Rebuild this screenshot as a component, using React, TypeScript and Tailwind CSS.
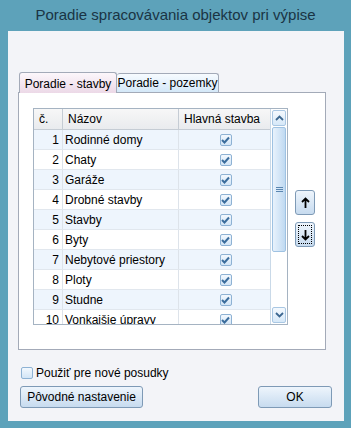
const rows = [
  "Rodinné domy",
  "Chaty",
  "Garáže",
  "Drobné stavby",
  "Stavby",
  "Byty",
  "Nebytové priestory",
  "Ploty",
  "Studne",
  "Vonkajšie úpravy",
];

function Check() {
  return (
    <div className="w-[12px] h-[12px] rounded-[2px] border border-[#8eb2d4] bg-gradient-to-b from-[#f2f8fe] to-[#d3e5f6] flex items-center justify-center">
      <svg width="9" height="8" viewBox="0 0 9 8">
        <path d="M1 4 L3.5 6.5 L8 1.5" fill="none" stroke="#3a6c9c" strokeWidth="2" />
      </svg>
    </div>
  );
}

function ScrollBar() {
  return (
    <div className="w-[18px] h-full border-l border-[#c9d9e8] bg-white flex flex-col p-px">
      <div className="h-[16px] rounded-[2px] border border-[#a9c7e3] bg-gradient-to-b from-[#f4f9fe] to-[#d6e8f8] flex items-center justify-center">
        <svg width="9" height="6" viewBox="0 0 9 6">
          <path d="M1 5 L4.5 1.5 L8 5" fill="none" stroke="#3c6790" strokeWidth="1.8" />
        </svg>
      </div>
      <div className="h-[125px] mt-px rounded-[2px] border border-[#9fc2e2] bg-gradient-to-r from-[#e8f2fc] via-[#d4e6f7] to-[#bfd9f1] flex items-center justify-center">
        <div className="flex flex-col gap-[1px]">
          <div className="w-[7px] h-px bg-[#5a86b0]" />
          <div className="w-[7px] h-px bg-[#5a86b0]" />
          <div className="w-[7px] h-px bg-[#5a86b0]" />
        </div>
      </div>
      <div className="flex-1" />
      <div className="h-[16px] rounded-[2px] border border-[#a9c7e3] bg-gradient-to-b from-[#f4f9fe] to-[#d6e8f8] flex items-center justify-center">
        <svg width="9" height="6" viewBox="0 0 9 6">
          <path d="M1 1 L4.5 4.5 L8 1" fill="none" stroke="#3c6790" strokeWidth="1.8" />
        </svg>
      </div>
    </div>
  );
}

function Grid() {
  return (
    <div className="w-[255px] h-[217px] border border-[#a5b3c2] bg-white flex overflow-hidden">
      <div className="w-[236px] flex flex-col">
        <div className="h-[21px] flex shrink-0 bg-gradient-to-b from-[#f7f7f7] to-[#e9ebee] border-b border-[#c5ccd4]">
          <div className="w-[29px] border-r border-[#c5ccd4] pl-[5px] flex items-center">č.</div>
          <div className="w-[116px] border-r border-[#c5ccd4] pl-[5px] flex items-center">Názov</div>
          <div className="w-[91px] pl-[5px] flex items-center whitespace-nowrap">Hlavná stavba</div>
        </div>
        {rows.map((name, i) => (
          <div
            key={name}
            className={
              "h-[20px] flex shrink-0 border-b border-[#e1e7ee] " +
              (i % 2 === 0 ? "bg-[#eef5fd]" : "bg-white")
            }
          >
            <div className="w-[29px] border-r border-[#dde3ea] pr-[3px] flex items-center justify-end">{i + 1}</div>
            <div className="w-[116px] border-r border-[#dde3ea] pl-[2px] flex items-center whitespace-nowrap">{name}</div>
            <div className="w-[91px] flex items-center justify-center pl-[2px]">
              <Check />
            </div>
          </div>
        ))}
      </div>
      <ScrollBar />
    </div>
  );
}

function ArrowButton({ dir, focused }: { dir: "up" | "down"; focused?: boolean }) {
  return (
    <div className="w-[20px] h-[25px] rounded-[3px] border border-[#7e9ab6] bg-gradient-to-b from-[#eef5fc] to-[#c7dbef] p-[2px]">
      <div className={"w-full h-full flex items-center justify-center " + (focused ? "border border-dotted border-black" : "")}>
        <svg width="9" height="12" viewBox="0 0 9 12">
          {dir === "up" ? (
            <path d="M4.5 11 V2 M1 5 L4.5 1.5 L8 5" fill="none" stroke="#000" strokeWidth="1.8" />
          ) : (
            <path d="M4.5 1 V10 M1 7 L4.5 10.5 L8 7" fill="none" stroke="#000" strokeWidth="1.8" />
          )}
        </svg>
      </div>
    </div>
  );
}

export default function App() {
  return (
    <div
      className="w-[351px] h-[428px] bg-[#5da2ba] flex flex-col text-[12px] text-black"
      style={{ fontFamily: '"Liberation Sans", Arial, sans-serif' }}
    >
      <div className="h-[31px] flex items-center justify-center text-[15px] text-[#1a3444]">
        Poradie spracovávania objektov pri výpise
      </div>
      <div className="ml-[8px] w-[336px] h-[390px] bg-[#f3f4f8] flex flex-col pl-[10px] pt-[41px]">
        <div className="flex h-[20px] pl-px">
          <div className="w-[98px] h-[21px] pt-px rounded-t-[3px] border border-b-0 border-[#a3aab8] bg-gradient-to-b from-[#fcf7fb] to-[#ecd9e7] flex items-center justify-center whitespace-nowrap relative z-10">
            Poradie - stavby
          </div>
          <div className="w-[102px] h-[19px] mt-px rounded-t-[3px] border border-l-0 border-b-0 border-[#a3aab8] bg-gradient-to-b from-[#f7fbff] to-[#d4e8f8] flex items-center justify-center whitespace-nowrap">
            Poradie - pozemky
          </div>
        </div>
        <div className="w-[308px] h-[258px] border border-[#a3aab8] bg-white flex pl-[14px] pt-[15px]">
          <Grid />
          <div className="flex flex-col gap-[7px] ml-[7px] mt-[82px]">
            <ArrowButton dir="up" />
            <ArrowButton dir="down" focused />
          </div>
        </div>
        <div className="flex items-center mt-[16px] ml-[3px] h-[14px]">
          <div className="w-[12px] h-[12px] rounded-[2px] border border-[#8eb2d4] bg-gradient-to-b from-[#f2f8fe] to-[#d3e5f6]" />
          <span className="ml-[3px]">Použiť pre nové posudky</span>
        </div>
        <div className="flex justify-between mt-[6px] ml-[2px] mr-[12px]">
          <div className="w-[123px] h-[22px] rounded-[3px] border border-[#7e9ab6] bg-gradient-to-b from-[#eef5fc] to-[#c7dbef] flex items-center justify-center">
            Pôvodné nastavenie
          </div>
          <div className="w-[74px] h-[22px] rounded-[3px] border border-[#7e9ab6] bg-gradient-to-b from-[#eef5fc] to-[#c7dbef] flex items-center justify-center">
            OK
          </div>
        </div>
      </div>
    </div>
  );
}
